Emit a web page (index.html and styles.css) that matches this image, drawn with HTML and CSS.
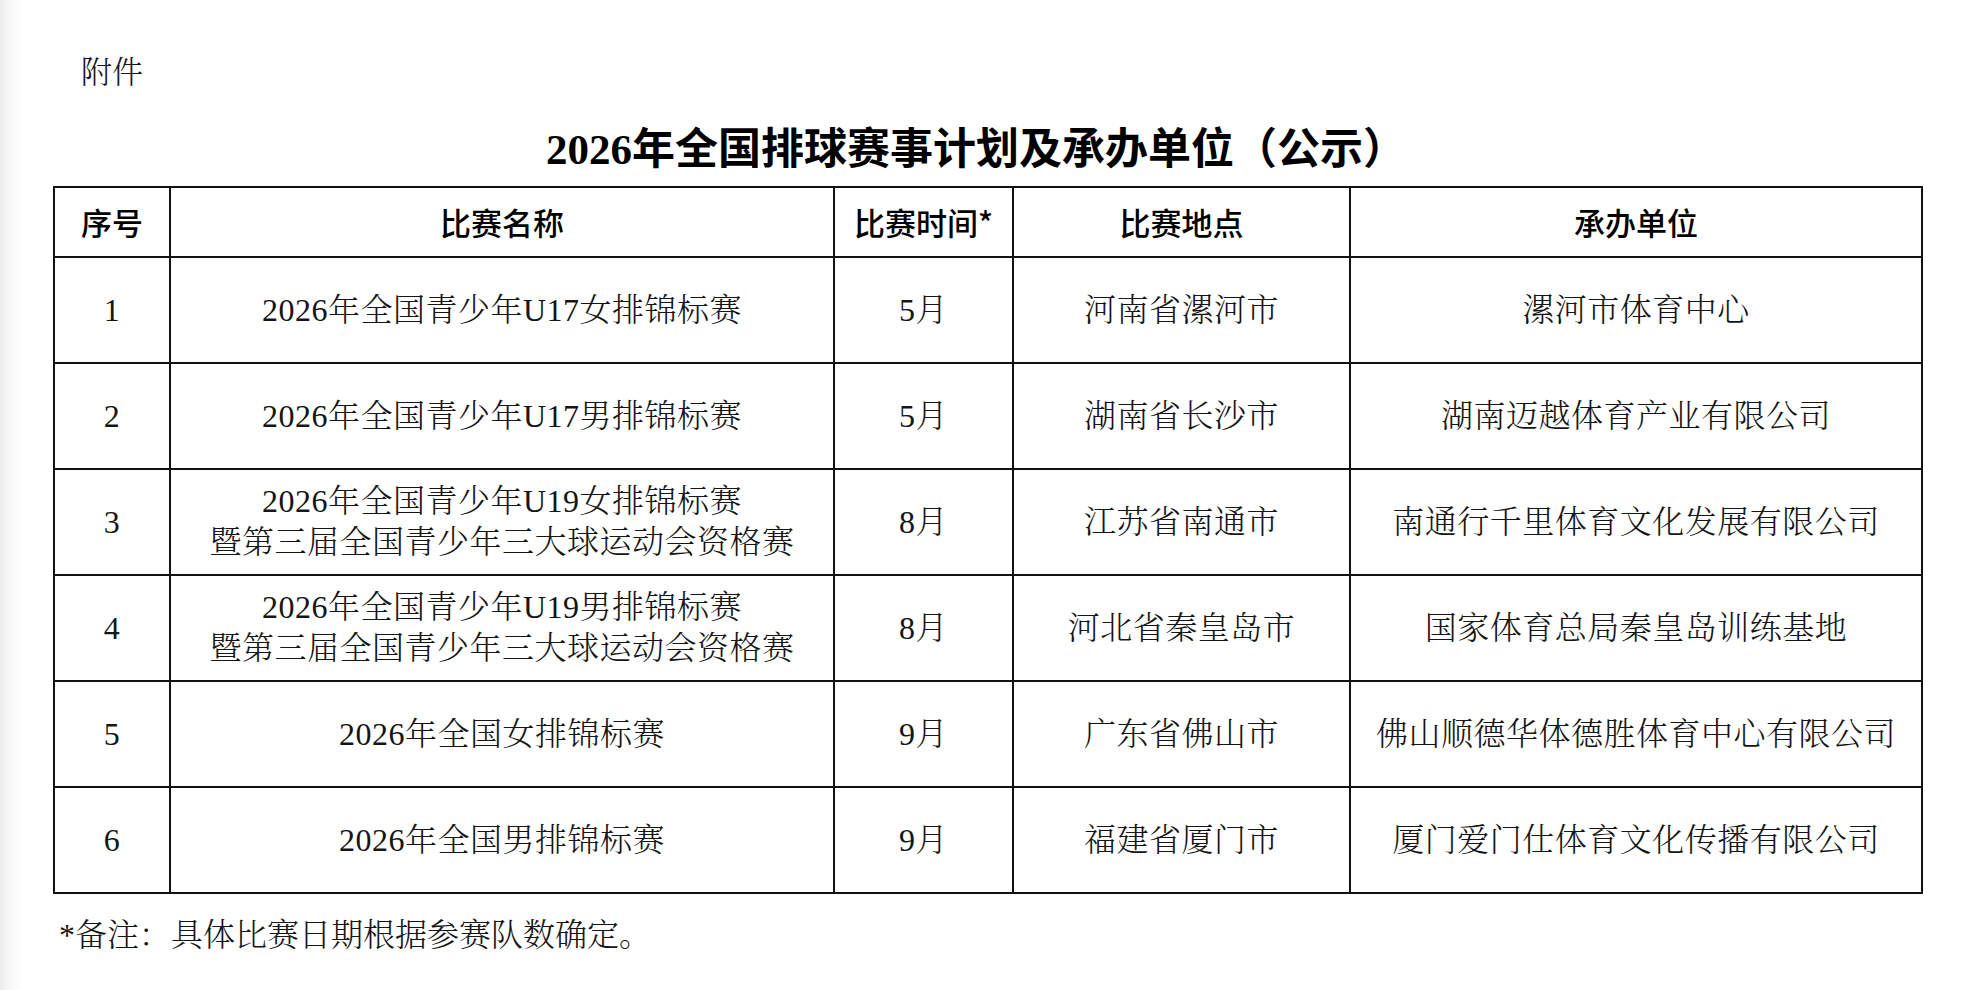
FILE: index.html
```html
<!DOCTYPE html>
<html lang="zh-CN">
<head>
<meta charset="utf-8">
<title>2026年全国排球赛事计划及承办单位（公示）</title>
<link rel="stylesheet" href="styles.css">
</head>
<body>
<div class="page">
  <div class="attach">附件</div>
  <h1 class="title">2026年全国排球赛事计划及承办单位（公示）</h1>
  <table class="plan">
    <colgroup>
      <col class="c-no">
      <col class="c-name">
      <col class="c-time">
      <col class="c-place">
      <col class="c-org">
    </colgroup>
    <thead>
      <tr>
        <th>序号</th>
        <th>比赛名称</th>
        <th>比赛时间*</th>
        <th>比赛地点</th>
        <th>承办单位</th>
      </tr>
    </thead>
    <tbody>
      <tr>
        <td>1</td>
        <td>2026年全国青少年U17女排锦标赛</td>
        <td>5月</td>
        <td>河南省漯河市</td>
        <td>漯河市体育中心</td>
      </tr>
      <tr>
        <td>2</td>
        <td>2026年全国青少年U17男排锦标赛</td>
        <td>5月</td>
        <td>湖南省长沙市</td>
        <td>湖南迈越体育产业有限公司</td>
      </tr>
      <tr>
        <td>3</td>
        <td>2026年全国青少年U19女排锦标赛<br>暨第三届全国青少年三大球运动会资格赛</td>
        <td>8月</td>
        <td>江苏省南通市</td>
        <td>南通行千里体育文化发展有限公司</td>
      </tr>
      <tr>
        <td>4</td>
        <td>2026年全国青少年U19男排锦标赛<br>暨第三届全国青少年三大球运动会资格赛</td>
        <td>8月</td>
        <td>河北省秦皇岛市</td>
        <td>国家体育总局秦皇岛训练基地</td>
      </tr>
      <tr>
        <td>5</td>
        <td>2026年全国女排锦标赛</td>
        <td>9月</td>
        <td>广东省佛山市</td>
        <td>佛山顺德华体德胜体育中心有限公司</td>
      </tr>
      <tr>
        <td>6</td>
        <td>2026年全国男排锦标赛</td>
        <td>9月</td>
        <td>福建省厦门市</td>
        <td>厦门爱门仕体育文化传播有限公司</td>
      </tr>
    </tbody>
  </table>
  <p class="note">*备注：具体比赛日期根据参赛队数确定。</p>
</div>
</body>
</html>
```
FILE: styles.css
```css
html, body {
  margin: 0;
  padding: 0;
  background: #ffffff;
}

body {
  width: 1979px;
  height: 990px;
  overflow: hidden;
  background: linear-gradient(to right, #ececec 0px, #f8f8f8 10px, #ffffff 22px);
  color: #151515;
  font-family: "Liberation Serif", "Noto Serif CJK SC", "Noto Sans CJK SC", serif;
}

.page {
  padding-top: 53px;
}

.attach {
  margin-left: 81px;
  font-size: 31px;
  line-height: 40px;
  font-weight: 300;
}

.title {
  margin: 32px 0 0 0;
  padding-right: 27px;
  text-align: center;
  font-family: "Liberation Serif", "Noto Sans CJK SC", sans-serif;
  font-weight: 700;
  font-size: 43px;
  line-height: 50px;
  color: #000;
}

.plan {
  margin: 11px 0 0 53px;
  width: 1868px;
  table-layout: fixed;
  border-collapse: collapse;
}

.c-no { width: 116px; }
.c-name { width: 664px; }
.c-time { width: 179px; }
.c-place { width: 337px; }
.c-org { width: 572px; }

.plan th,
.plan td {
  border: 2px solid #111;
  padding: 0;
  text-align: center;
  vertical-align: middle;
}

.plan thead tr {
  height: 70px;
}

.plan th {
  font-family: "Noto Sans CJK SC", sans-serif;
  font-weight: 500;
  font-size: 31px;
  line-height: 40px;
  color: #000;
}

.plan tbody tr {
  height: 106px;
}

.plan td {
  font-size: 32px;
  line-height: 41px;
  font-weight: 300;
  letter-spacing: 0.5px;
}

.note {
  margin: 21px 0 0 59px;
  font-size: 32px;
  line-height: 40px;
  font-weight: 300;
}
```
